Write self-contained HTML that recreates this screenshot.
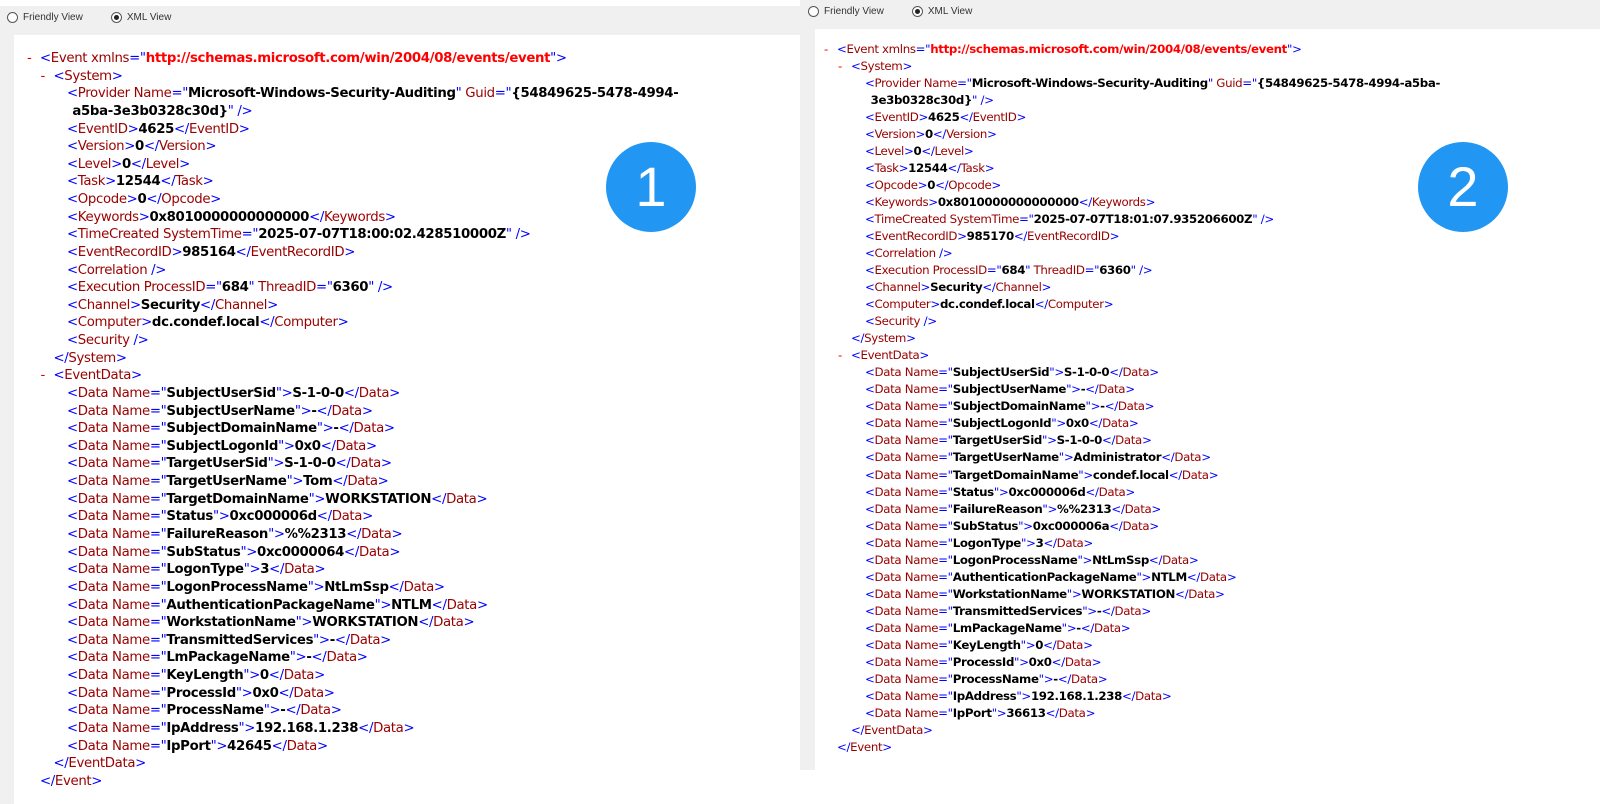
<!DOCTYPE html>
<html><head><meta charset="utf-8"><style>
body{margin:0;width:1600px;height:804px;background:#fff;position:relative;overflow:hidden;font-family:"DejaVu Sans","Liberation Sans",sans-serif;}
.p{position:absolute;background:#f0f0f0}
.w{position:absolute;background:#fff}
.radio{position:absolute;font-size:10px;color:#333;font-family:"Liberation Sans",sans-serif;display:flex;align-items:center}
.rb{width:9px;height:9px;border:1px solid #555;border-radius:50%;display:inline-block;margin-right:5px;position:relative;background:#fff}
.rb.on::after{content:"";position:absolute;left:2px;top:2px;width:5px;height:5px;border-radius:50%;background:#222}
.x{position:absolute;white-space:pre;font-size:13.3px;letter-spacing:-0.35px;line-height:17px}
.r .x{font-size:11.8px}
.m{color:#e00000;position:absolute}
.t{color:#0000ff}
.n{color:#990000}
.b{font-weight:bold;color:#000}
.rv{font-weight:bold;color:#ff0000}
.c{position:absolute;width:90px;height:90px;border-radius:50%;background:#2196f3;color:#fff;font-family:"Liberation Sans",sans-serif;font-size:56px;text-align:center;line-height:90px}
</style></head><body>
<div class="p" style="left:0;top:6px;width:800px;height:798px"></div>
<div class="w" style="left:14px;top:35px;width:786px;height:769px"></div>
<div class="p" style="left:800px;top:0;width:800px;height:770px"></div>
<div class="w" style="left:815px;top:29px;width:785px;height:741px"></div>
<div class="radio" style="left:7px;top:12px"><span class="rb"></span>Friendly View<span style="width:28px"></span><span class="rb on"></span>XML View</div>
<div class="radio" style="left:808px;top:6px"><span class="rb"></span>Friendly View<span style="width:28px"></span><span class="rb on"></span>XML View</div>
<div class="c" style="left:606px;top:142px">1</div>
<div class="c" style="left:1418px;top:142px">2</div>
<div id="L"></div><div id="R" class="r"></div>
<script>
function build(id,x0,y0,dy,ind,d){
 var L=[
 [0,'-','<span class="t">&lt;</span><span class="n">Event xmlns</span><span class="t">="</span><span class="rv">http://schemas.microsoft.com/win/2004/08/events/event</span><span class="t">"&gt;</span>'],
 [1,'-','<span class="t">&lt;</span><span class="n">System</span><span class="t">&gt;</span>'],
 [2,'',A('Provider Name','Microsoft-Windows-Security-Auditing')+'<span class="n"> Guid</span><span class="t">="</span><span class="b">'+d.g1+'</span>'],
 [2.4,'','<span class="b">'+d.g2+'</span><span class="t">" /&gt;</span>'],
 [2,'',E('EventID',d.id)],[2,'',E('Version','0')],[2,'',E('Level','0')],[2,'',E('Task','12544')],[2,'',E('Opcode','0')],[2,'',E('Keywords','0x8010000000000000')],
 [2,'','<span class="t">&lt;</span><span class="n">TimeCreated SystemTime</span><span class="t">="</span><span class="b">'+d.tm+'</span><span class="t">" /&gt;</span>'],
 [2,'',E('EventRecordID',d.rec)],
 [2,'','<span class="t">&lt;</span><span class="n">Correlation</span><span class="t"> /&gt;</span>'],
 [2,'','<span class="t">&lt;</span><span class="n">Execution ProcessID</span><span class="t">="</span><span class="b">684</span><span class="t">"</span><span class="n"> ThreadID</span><span class="t">="</span><span class="b">6360</span><span class="t">" /&gt;</span>'],
 [2,'',E('Channel','Security')],[2,'',E('Computer','dc.condef.local')],
 [2,'','<span class="t">&lt;</span><span class="n">Security</span><span class="t"> /&gt;</span>'],
 [1,'','<span class="t">&lt;/</span><span class="n">System</span><span class="t">&gt;</span>'],
 [1,'-','<span class="t">&lt;</span><span class="n">EventData</span><span class="t">&gt;</span>']];
 d.data.forEach(function(p){L.push([2,'','<span class="t">&lt;</span><span class="n">Data Name</span><span class="t">="</span><span class="b">'+p[0]+'</span><span class="t">"&gt;</span><span class="b">'+p[1]+'</span><span class="t">&lt;/</span><span class="n">Data</span><span class="t">&gt;</span>'])});
 L.push([1,'','<span class="t">&lt;/</span><span class="n">EventData</span><span class="t">&gt;</span>']);
 L.push([0,'','<span class="t">&lt;/</span><span class="n">Event</span><span class="t">&gt;</span>']);
 var h='';
 L.forEach(function(l,i){var y=y0+i*dy-9;var x=x0+l[0]*ind;
  if(l[1])h+='<div class="x m" style="left:'+(x-13)+'px;top:'+y+'px">-</div>';
  h+='<div class="x" style="left:'+x+'px;top:'+y+'px">'+l[2]+'</div>';});
 document.getElementById(id).innerHTML=h;
}
function A(n,v){return '<span class="t">&lt;</span><span class="n">'+n+'</span><span class="t">="</span><span class="b">'+v+'</span><span class="t">"</span>'}
function E(n,v){return '<span class="t">&lt;</span><span class="n">'+n+'</span><span class="t">&gt;</span><span class="b">'+v+'</span><span class="t">&lt;/</span><span class="n">'+n+'</span><span class="t">&gt;</span>'}
build('L',40,59,17.63,13.5,{g1:'{54849625-5478-4994-',g2:'a5ba-3e3b0328c30d}',id:'4625',tm:'2025-07-07T18:00:02.428510000Z',rec:'985164',
data:[['SubjectUserSid','S-1-0-0'],['SubjectUserName','-'],['SubjectDomainName','-'],['SubjectLogonId','0x0'],['TargetUserSid','S-1-0-0'],['TargetUserName','Tom'],['TargetDomainName','WORKSTATION'],['Status','0xc000006d'],['FailureReason','%%2313'],['SubStatus','0xc0000064'],['LogonType','3'],['LogonProcessName','NtLmSsp'],['AuthenticationPackageName','NTLM'],['WorkstationName','WORKSTATION'],['TransmittedServices','-'],['LmPackageName','-'],['KeyLength','0'],['ProcessId','0x0'],['ProcessName','-'],['IpAddress','192.168.1.238'],['IpPort','42645']]});
build('R',837,50,17.02,14,{g1:'{54849625-5478-4994-a5ba-',g2:'3e3b0328c30d}',id:'4625',tm:'2025-07-07T18:01:07.935206600Z',rec:'985170',
data:[['SubjectUserSid','S-1-0-0'],['SubjectUserName','-'],['SubjectDomainName','-'],['SubjectLogonId','0x0'],['TargetUserSid','S-1-0-0'],['TargetUserName','Administrator'],['TargetDomainName','condef.local'],['Status','0xc000006d'],['FailureReason','%%2313'],['SubStatus','0xc000006a'],['LogonType','3'],['LogonProcessName','NtLmSsp'],['AuthenticationPackageName','NTLM'],['WorkstationName','WORKSTATION'],['TransmittedServices','-'],['LmPackageName','-'],['KeyLength','0'],['ProcessId','0x0'],['ProcessName','-'],['IpAddress','192.168.1.238'],['IpPort','36613']]});
</script>
</body></html>
